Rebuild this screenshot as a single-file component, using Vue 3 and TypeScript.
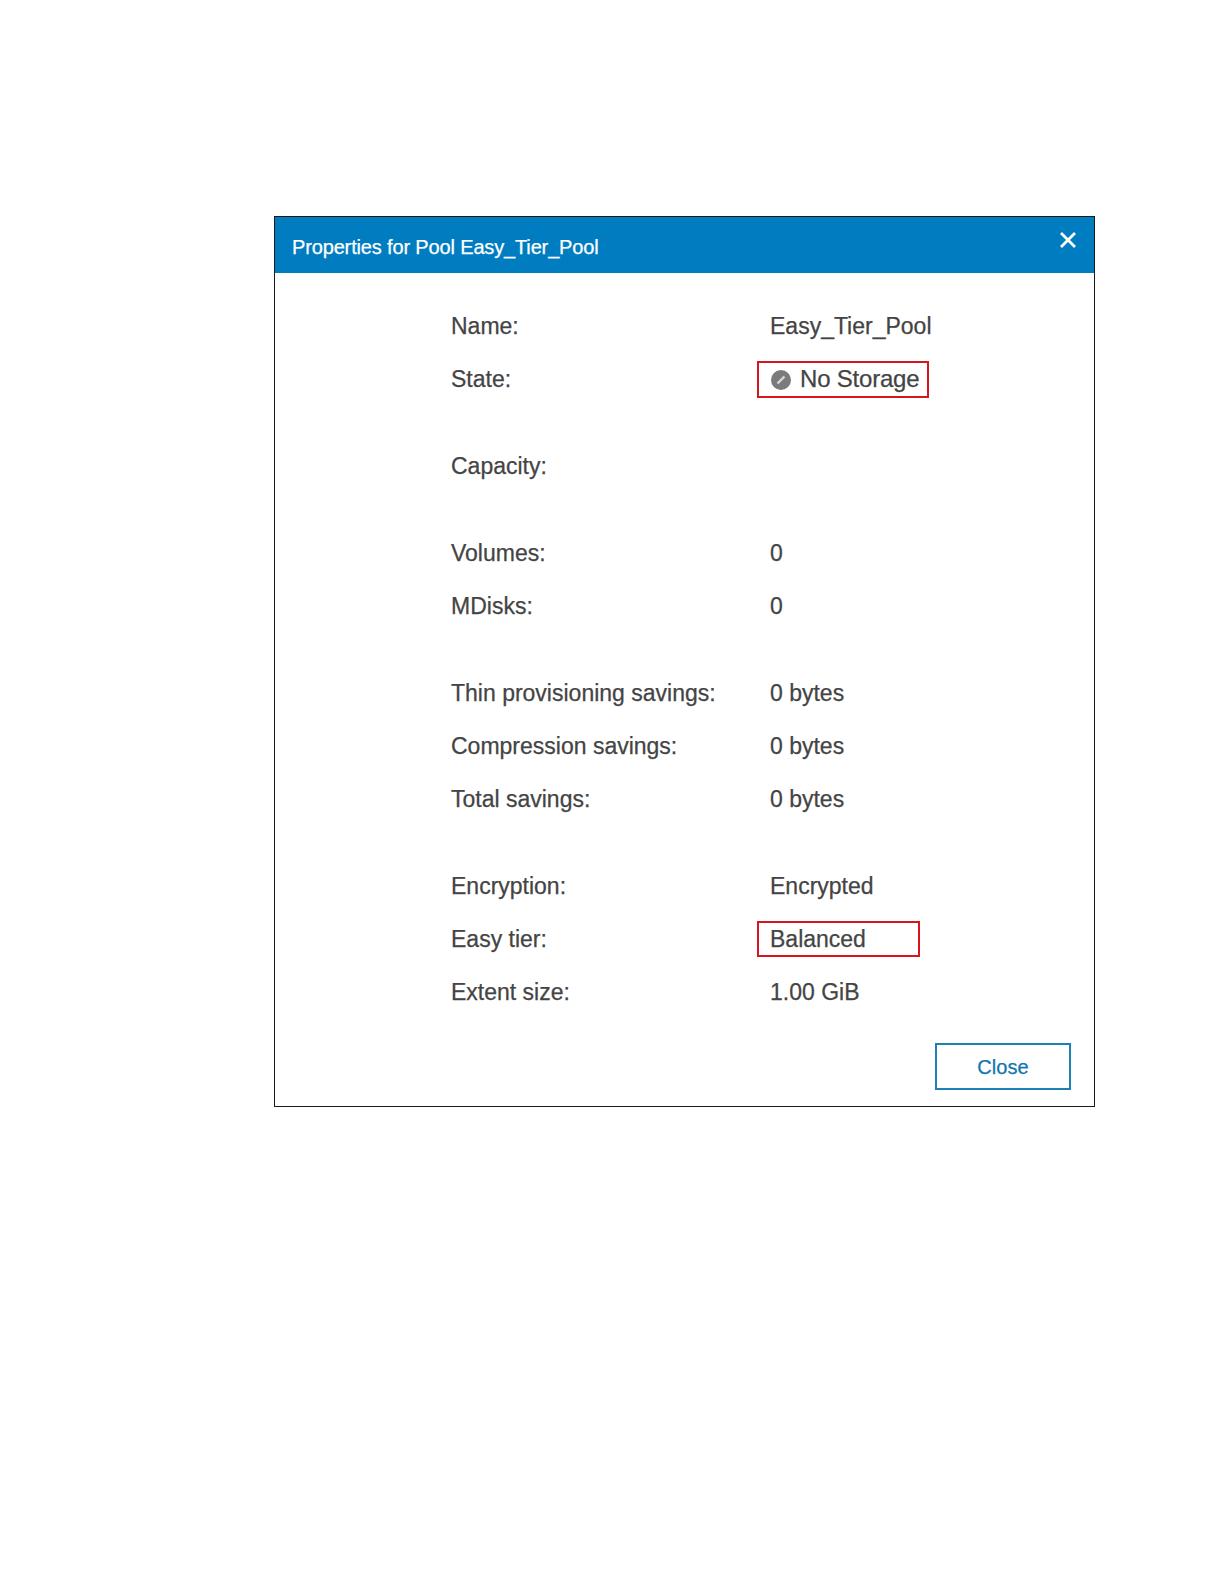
<script setup lang="ts">
interface Row { label: string; value?: string; mark?: 'state' | 'tier' }
const groups: Row[][] = [
  [{ label: 'Name:', value: 'Easy_Tier_Pool' }, { label: 'State:', value: 'No Storage', mark: 'state' }],
  [{ label: 'Capacity:' }],
  [{ label: 'Volumes:', value: '0' }, { label: 'MDisks:', value: '0' }],
  [
    { label: 'Thin provisioning savings:', value: '0 bytes' },
    { label: 'Compression savings:', value: '0 bytes' },
    { label: 'Total savings:', value: '0 bytes' },
  ],
  [
    { label: 'Encryption:', value: 'Encrypted' },
    { label: 'Easy tier:', value: 'Balanced', mark: 'tier' },
    { label: 'Extent size:', value: '1.00 GiB' },
  ],
]
</script>

<template>
  <div class="page">
    <section class="dialog">
      <header class="head">
        <span class="title">Properties for Pool Easy_Tier_Pool</span>
        <svg class="x" viewBox="0 0 16 16" width="16" height="16" aria-hidden="true">
          <path d="M1 1 15 15M15 1 1 15" fill="none" stroke="#fff" stroke-width="2.8" />
        </svg>
      </header>
      <div class="body">
        <div v-for="(g, i) in groups" :key="i" class="group">
          <div v-for="r in g" :key="r.label" class="row">
            <span class="label">{{ r.label }}</span>
            <span class="value" :class="r.mark">
              <svg v-if="r.mark === 'state'" class="state-icon" viewBox="0 0 20 20" width="20" height="20" aria-hidden="true">
                <circle cx="10" cy="10" r="10" fill="#7b7b7b" />
                <path d="M6.5 13.5 13.5 6.5" stroke="#d8d8d8" stroke-width="2.4" />
              </svg>
              {{ r.value }}
            </span>
          </div>
        </div>
      </div>
      <footer class="foot">
        <button class="close" type="button">Close</button>
      </footer>
    </section>
  </div>
</template>

<style>
html, body { background: #fff; }
</style>

<style scoped>
.page {
  width: 1224px;
  height: 1584px;
  padding: 216px 0 0 274px;
  box-sizing: border-box;
  font-family: "Liberation Sans", Arial, sans-serif;
  color: #444;
  -webkit-text-stroke: 0.25px currentColor;
}
.dialog {
  width: 821px;
  height: 891px;
  box-sizing: border-box;
  border: 1px solid #1a1a1a;
  display: flex;
  flex-direction: column;
}
.head {
  height: 56px;
  flex: none;
  background: #007cc0;
  color: #fff;
  display: flex;
  justify-content: space-between;
  padding: 0 18px 0 17px;
}
.title {
  font-size: 20px;
  line-height: 60px;
  letter-spacing: -0.15px;
}
.x { margin-top: 15px; }
.body {
  flex: 1;
  padding: 27px 0 0 176px;
  display: flex;
  flex-direction: column;
  gap: 34px;
}
.row {
  height: 53px;
  display: grid;
  grid-template-columns: 319px 1fr;
  align-items: center;
  font-size: 23px;
  letter-spacing: 0;
}
.value { position: relative; display: flex; align-items: center; }
.state { font-size: 24px; letter-spacing: -0.2px; padding-bottom: 2px; }
.state-icon { margin: 2px 9px 0 1px; }
.state::after, .tier::after {
  content: "";
  position: absolute;
  left: -13px;
  top: 50%;
  box-sizing: border-box;
  border: 2px solid #d8141c;
}
.state::after { width: 172px; height: 37px; margin-top: -18.5px; }
.tier::after { width: 163px; height: 36px; margin-top: -18.5px; }
.foot {
  flex: none;
  display: flex;
  justify-content: flex-end;
  padding: 0 23px 16px 0;
}
.close {
  width: 136px;
  height: 47px;
  background: #fff;
  border: 2px solid #1e80b4;
  color: #0f76ae;
  font: 20px "Liberation Sans", Arial, sans-serif;
  letter-spacing: 0.1px;
  padding: 2px 0 0;
  -webkit-text-stroke: 0.25px currentColor;
}
</style>
